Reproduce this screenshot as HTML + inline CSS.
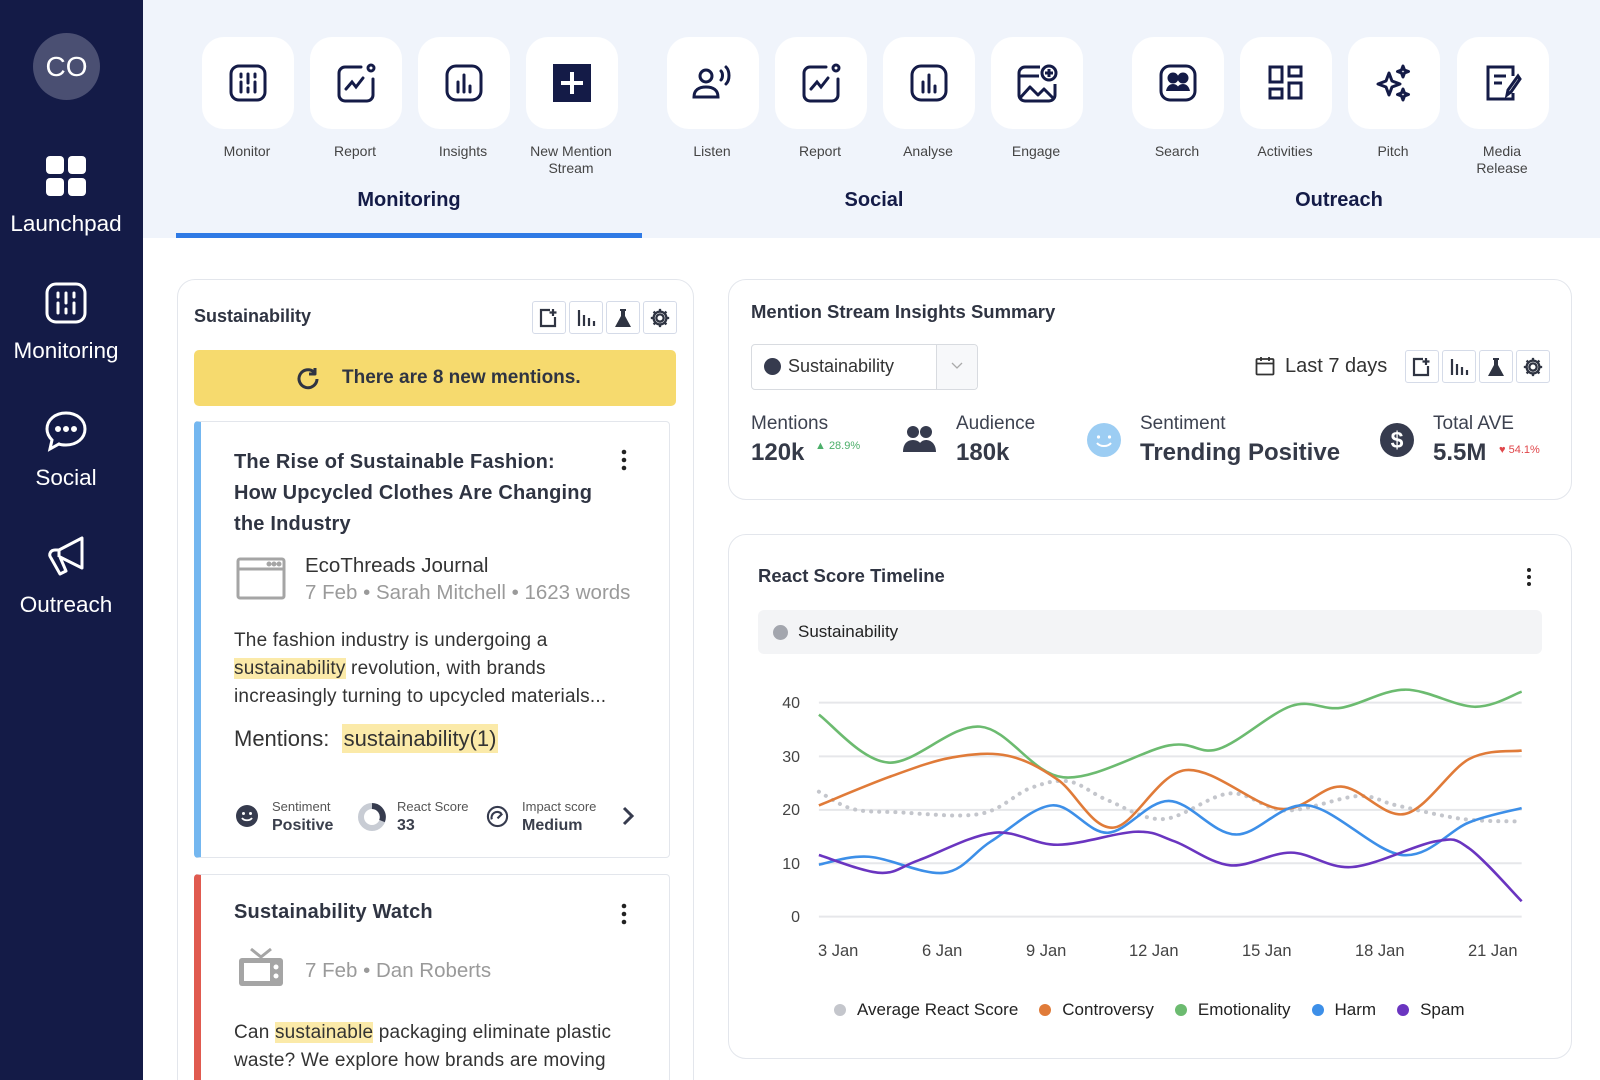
<!DOCTYPE html>
<html style="width:1600px;height:1080px;overflow:hidden"><head><meta charset="utf-8">
<style>
*{box-sizing:border-box;margin:0;padding:0}
body{width:1600px;height:1080px;overflow:hidden;background:#fff;font-family:"Liberation Sans",sans-serif;position:relative;color:#2b3040}
.abs{position:absolute}
#side{left:0;top:0;width:143px;height:1080px;background:#141b47}
.nav{position:absolute;left:0;width:132px;text-align:center;color:#fff;font-size:22.5px}
#top{left:143px;top:0;width:1457px;height:238px;background:#f0f4fb}
.tile{position:absolute;top:37px;width:92px;height:92px;background:#fff;border-radius:22px;display:flex;align-items:center;justify-content:center}
.tl{position:absolute;top:143px;width:120px;text-align:center;font-size:14px;color:#444;line-height:17px}
.grp{position:absolute;top:189px;font-size:20px;font-weight:bold;color:#141b47;transform:translateX(-50%)}
.card{position:absolute;background:#fff;border:1.5px solid #e3e6ec;border-radius:18px}
.ib{position:absolute;width:34px;height:33px;border:1.5px solid #d5dbe8;border-radius:3px;display:flex;align-items:center;justify-content:center;background:#fff}
.hl{background:#fbeaa9}
.sm{font-size:13px;color:#555}
.bv{font-size:16px;font-weight:bold;color:#3a3f4c}
.lab{font-size:19px;color:#3d4250}
.val{font-size:24px;font-weight:bold;color:#353a48}
.snip{font-size:19px;line-height:28px;color:#333;letter-spacing:0.2px}
</style></head><body>
<div id="side" class="abs">
  <div class="abs" style="left:33px;top:33px;width:67px;height:67px;border-radius:50%;background:#4a4f72;color:#fff;font-size:28px;display:flex;align-items:center;justify-content:center">CO</div>
  <svg class="abs" style="left:46px;top:156px" width="40" height="40" viewBox="0 0 40 40"><rect x="0" y="0" width="18" height="18" rx="4" fill="#fff"/><rect x="22" y="0" width="18" height="18" rx="4" fill="#fff"/><rect x="0" y="22" width="18" height="18" rx="4" fill="#fff"/><rect x="22" y="22" width="18" height="18" rx="4" fill="#fff"/></svg>
  <div class="nav" style="top:211px">Launchpad</div>
  <svg class="abs" style="left:45px;top:282px" width="42" height="42" viewBox="0 0 42 42" fill="none" stroke="#fff" stroke-width="3" stroke-linecap="round"><rect x="2" y="2" width="38" height="38" rx="9"/><path d="M13 11v4M13 21v10M21 11v10M21 27v4M29 11v4M29 21v10"/></svg>
  <div class="nav" style="top:338px">Monitoring</div>
  <svg class="abs" style="left:44px;top:410px" width="44" height="42" viewBox="0 0 44 42" fill="none" stroke="#fff" stroke-width="3"><path d="M22 3C11 3 3 10 3 19c0 5 2 8 5 11l-2 9 9-5c2 1 5 1 7 1 11 0 19-7 19-16S33 3 22 3z"/><circle cx="14" cy="19" r="1.5" fill="#fff"/><circle cx="22" cy="19" r="1.5" fill="#fff"/><circle cx="30" cy="19" r="1.5" fill="#fff"/></svg>
  <div class="nav" style="top:465px">Social</div>
  <svg class="abs" style="left:46px;top:535px" width="40" height="44" viewBox="0 0 40 44" fill="none" stroke="#fff" stroke-width="3" stroke-linejoin="round"><path d="M36 3v30L14 22l6 14-6 3-9-16c-3-4 0-8 4-8h4L36 3z"/><path d="M13 15v7"/></svg>
  <div class="nav" style="top:592px">Outreach</div>
</div>

<div id="top" class="abs"></div>
<div class="tile" style="left:202px"><svg width="40" height="40" viewBox="0 0 40 40" fill="none" stroke="#141b47" stroke-width="3" stroke-linecap="round"><rect x="3" y="3" width="34" height="34" rx="8"/><path d="M13 11v3M13 19v10M20 11v9M20 25v4M27 11v3M27 19v10"/></svg></div>
<div class="tile" style="left:310px"><svg width="42" height="42" viewBox="0 0 42 42" fill="none" stroke="#141b47" stroke-width="3" stroke-linecap="round"><path d="M26 5H10a6 6 0 0 0-6 6v22a6 6 0 0 0 6 6h22a6 6 0 0 0 6-6V17"/><circle cx="36" cy="6" r="3"/><path d="M11 27l6-7 4 5 7-9"/></svg></div>
<div class="tile" style="left:418px"><svg width="40" height="40" viewBox="0 0 40 40" fill="none" stroke="#141b47" stroke-width="3" stroke-linecap="round"><rect x="3" y="3" width="34" height="34" rx="9"/><path d="M14 19v10M20 12v17M26 23v6"/></svg></div>
<div class="tile" style="left:526px"><svg width="38" height="38" viewBox="0 0 38 38"><rect width="38" height="38" fill="#141b47"/><path d="M19 8v22M8 19h22" stroke="#fff" stroke-width="4"/></svg></div>
<div class="tile" style="left:667px"><svg width="44" height="40" viewBox="0 0 44 40" fill="none" stroke="#141b47" stroke-width="3" stroke-linecap="round"><circle cx="15" cy="13" r="6"/><path d="M3 34c0-7 5-10 12-10s12 3 12 10z"/><path d="M30 8c2 2 2 7 0 9M35 4c4 4 4 13 0 17"/></svg></div>
<div class="tile" style="left:775px"><svg width="42" height="42" viewBox="0 0 42 42" fill="none" stroke="#141b47" stroke-width="3" stroke-linecap="round"><path d="M26 5H10a6 6 0 0 0-6 6v22a6 6 0 0 0 6 6h22a6 6 0 0 0 6-6V17"/><circle cx="36" cy="6" r="3"/><path d="M11 27l6-7 4 5 7-9"/></svg></div>
<div class="tile" style="left:883px"><svg width="40" height="40" viewBox="0 0 40 40" fill="none" stroke="#141b47" stroke-width="3" stroke-linecap="round"><rect x="3" y="3" width="34" height="34" rx="9"/><path d="M14 19v10M20 12v17M26 23v6"/></svg></div>
<div class="tile" style="left:991px"><svg width="42" height="42" viewBox="0 0 42 42" fill="none" stroke="#141b47" stroke-width="3" stroke-linejoin="round"><path d="M24 5H9a6 6 0 0 0-6 6v22a6 6 0 0 0 6 6h24a6 6 0 0 0 6-6V22"/><path d="M3 14h20"/><circle cx="33" cy="11" r="7"/><path d="M33 7v8M29 11h8"/><path d="M4 36l10-11 8 8 6-6 10 10"/></svg></div>
<div class="tile" style="left:1132px"><svg width="40" height="40" viewBox="0 0 40 40" fill="none" stroke="#141b47" stroke-width="3"><rect x="3" y="3" width="34" height="34" rx="9"/><circle cx="15" cy="15" r="4" fill="#141b47"/><circle cx="25" cy="15" r="4" fill="#141b47"/><path d="M8 28c1-5 4-7 7-7s6 2 7 7zM18 28c1-5 4-7 7-7s6 2 7 7z" fill="#141b47" stroke="none"/></svg></div>
<div class="tile" style="left:1240px"><svg width="36" height="36" viewBox="0 0 36 36" fill="none" stroke="#141b47" stroke-width="3"><rect x="2" y="2" width="12" height="15"/><rect x="21" y="2" width="12" height="9"/><rect x="2" y="24" width="12" height="9"/><rect x="21" y="18" width="12" height="15"/></svg></div>
<div class="tile" style="left:1348px"><svg width="40" height="40" viewBox="0 0 40 40" fill="none" stroke="#141b47" stroke-width="3" stroke-linejoin="round"><path d="M15 10l3 8 8 3-8 3-3 8-3-8-8-3 8-3z"/><path d="M29 3l1.5 4 4 1.5-4 1.5L29 14l-1.5-4-4-1.5 4-1.5z"/><path d="M29 26l1.5 4 4 1.5-4 1.5L29 37l-1.5-4-4-1.5 4-1.5z"/></svg></div>
<div class="tile" style="left:1457px"><svg width="38" height="38" viewBox="0 0 38 38" fill="none" stroke="#141b47" stroke-width="3"><path d="M29 12V3H4v32h25v-6"/><path d="M10 12h12M10 19h8"/><path d="M34 12L24 26l-1 5 4-3L36 15z"/></svg></div>
<div class="tl" style="left:187px">Monitor</div>
<div class="tl" style="left:295px">Report</div>
<div class="tl" style="left:403px">Insights</div>
<div class="tl" style="left:511px">New Mention<br>Stream</div>
<div class="tl" style="left:652px">Listen</div>
<div class="tl" style="left:760px">Report</div>
<div class="tl" style="left:868px">Analyse</div>
<div class="tl" style="left:976px">Engage</div>
<div class="tl" style="left:1117px">Search</div>
<div class="tl" style="left:1225px">Activities</div>
<div class="tl" style="left:1333px">Pitch</div>
<div class="tl" style="left:1442px">Media<br>Release</div>
<div class="grp" style="left:409px">Monitoring</div>
<div class="grp" style="left:874px">Social</div>
<div class="grp" style="left:1339px">Outreach</div>
<div class="abs" style="left:176px;top:233px;width:466px;height:5px;background:#2f7ae5"></div>

<div class="card" style="left:177px;top:279px;width:517px;height:840px"></div>
<div class="abs" style="left:194px;top:306px;font-size:18px;font-weight:bold;color:#2f3442">Sustainability</div>
<div class="ib" style="left:532px;top:301px"><svg width="20" height="20" viewBox="0 0 20 20" fill="none" stroke="#2f3442" stroke-width="2.2"><path d="M11 2H2v16h14V9"/><path d="M14 1v7M10.5 4.5h7"/></svg></div>
<div class="ib" style="left:569px;top:301px"><svg width="20" height="20" viewBox="0 0 20 20" stroke="#2f3442" stroke-width="2.2"><path d="M3 2v16M8 7v11M13 10v8M18 13v5"/></svg></div>
<div class="ib" style="left:606px;top:301px"><svg width="18" height="20" viewBox="0 0 18 20"><path d="M6 1h6v2h-1v5l6 11H1L7 8V3H6z" fill="#2f3442"/></svg></div>
<div class="ib" style="left:643px;top:301px"><svg width="22" height="22" viewBox="0 0 24 24" fill="none" stroke="#2f3442" stroke-width="2.5"><circle cx="12" cy="12" r="4"/><path d="M12 2v3M12 19v3M2 12h3M19 12h3M5 5l2 2M17 17l2 2M5 19l2-2M17 7l2-2"/><circle cx="12" cy="12" r="7"/></svg></div>
<div class="abs" style="left:194px;top:350px;width:482px;height:56px;background:#f6da6e;border-radius:5px"></div>
<svg class="abs" style="left:295px;top:366px" width="26" height="26" viewBox="0 0 26 26" fill="none" stroke="#2f3442" stroke-width="3"><path d="M22 13a9 9 0 1 1-3-7"/><path d="M20 2v6h-6" stroke-linejoin="round"/></svg>
<div class="abs" style="left:342px;top:367px;font-size:19px;font-weight:bold;color:#2f3442">There are 8 new mentions.</div>

<div class="abs" style="left:194px;top:421px;width:476px;height:437px;border:1.5px solid #e3e6ec;border-left:7px solid #74b7f0;border-radius:4px;background:#fff"></div>
<div class="abs" style="left:234px;top:447px;width:420px;white-space:nowrap;font-size:20px;font-weight:bold;line-height:31px;color:#2f3442;letter-spacing:0.2px">The Rise of Sustainable Fashion:<br>How Upcycled Clothes Are Changing<br>the Industry</div>
<svg class="abs" style="left:621px;top:449px" width="6" height="22"><circle cx="3" cy="3" r="2.3" fill="#222"/><circle cx="3" cy="11" r="2.3" fill="#222"/><circle cx="3" cy="19" r="2.3" fill="#222"/></svg>
<svg class="abs" style="left:236px;top:557px" width="50" height="43" viewBox="0 0 50 43" fill="none" stroke="#a5a5a5" stroke-width="3"><rect x="2" y="2" width="46" height="39" rx="2"/><path d="M2 12h46"/><circle cx="33" cy="7" r="1" fill="#a5a5a5"/><circle cx="38" cy="7" r="1" fill="#a5a5a5"/><circle cx="43" cy="7" r="1" fill="#a5a5a5"/></svg>
<div class="abs" style="left:305px;top:554px;font-size:20.5px;color:#333">EcoThreads Journal</div>
<div class="abs" style="left:305px;top:581px;font-size:20.5px;color:#9a9a9a">7 Feb • Sarah Mitchell • 1623 words</div>
<div class="abs snip" style="left:234px;top:627px;width:385px">The fashion industry is undergoing a <span class="hl">sustainability</span> revolution, with brands increasingly turning to upcycled materials...</div>
<div class="abs" style="left:234px;top:726px;font-size:22px;color:#333">Mentions:&nbsp; <span class="hl" style="padding:2px 2px">sustainability(1)</span></div>
<svg class="abs" style="left:236px;top:805px" width="22" height="22" viewBox="0 0 22 22"><circle cx="11" cy="11" r="11" fill="#363b4e"/><circle cx="7.5" cy="8.5" r="1.5" fill="#fff"/><circle cx="14.5" cy="8.5" r="1.5" fill="#fff"/><path d="M6 13c2 3 8 3 10 0" stroke="#fff" stroke-width="1.8" fill="none"/></svg>
<div class="abs sm" style="left:272px;top:799px">Sentiment</div>
<div class="abs bv" style="left:272px;top:817px">Positive</div>
<svg class="abs" style="left:358px;top:803px" width="28" height="28" viewBox="0 0 28 28" fill="none" stroke-width="6"><circle cx="14" cy="14" r="11" stroke="#c8ccd4"/><path d="M14 3a11 11 0 0 1 10 15" stroke="#363b4e"/></svg>
<div class="abs sm" style="left:397px;top:799px">React Score</div>
<div class="abs bv" style="left:397px;top:817px">33</div>
<svg class="abs" style="left:486px;top:805px" width="23" height="23" viewBox="0 0 24 24" fill="none" stroke="#363b4e" stroke-width="2.2"><circle cx="12" cy="12" r="10"/><path d="M6 15a6 6 0 0 1 10-6"/><path d="M12 14l5-5"/></svg>
<div class="abs sm" style="left:522px;top:799px">Impact score</div>
<div class="abs bv" style="left:522px;top:817px">Medium</div>
<svg class="abs" style="left:621px;top:806px" width="14" height="20" viewBox="0 0 14 20" fill="none" stroke="#363b4e" stroke-width="3"><path d="M3 2l8 8-8 8"/></svg>

<div class="abs" style="left:194px;top:874px;width:476px;height:260px;border:1.5px solid #e3e6ec;border-left:7px solid #e05a4f;border-radius:4px;background:#fff"></div>
<div class="abs" style="left:234px;top:901px;font-size:20px;font-weight:bold;color:#2f3442;letter-spacing:0.2px">Sustainability Watch</div>
<svg class="abs" style="left:621px;top:903px" width="6" height="22"><circle cx="3" cy="3" r="2.3" fill="#222"/><circle cx="3" cy="11" r="2.3" fill="#222"/><circle cx="3" cy="19" r="2.3" fill="#222"/></svg>
<svg class="abs" style="left:238px;top:947px" width="46" height="40" viewBox="0 0 46 40"><path d="M13 2l10 8 10-8" stroke="#a5a5a5" stroke-width="3" fill="none"/><rect x="1" y="11" width="44" height="28" rx="3" fill="#a5a5a5"/><rect x="6" y="16" width="26" height="18" fill="#fff"/><circle cx="38" cy="20" r="2.5" fill="#fff"/><circle cx="38" cy="29" r="2.5" fill="#fff"/></svg>
<div class="abs" style="left:305px;top:959px;font-size:20.5px;color:#9a9a9a">7 Feb • Dan Roberts</div>
<div class="abs snip" style="left:234px;top:1019px;width:400px">Can <span class="hl">sustainable</span> packaging eliminate plastic waste? We explore how brands are moving</div>

<div class="card" style="left:728px;top:279px;width:844px;height:221px"></div>
<div class="abs" style="left:751px;top:301px;font-size:18.5px;font-weight:bold;color:#2f3442">Mention Stream Insights Summary</div>
<div class="abs" style="left:751px;top:344px;width:227px;height:46px;border:1.5px solid #d8dbe0;border-radius:4px;background:#fff"></div>
<div class="abs" style="left:936px;top:345px;width:41px;height:44px;border-left:1.5px solid #d8dbe0;background:#f7f8fa;border-radius:0 4px 4px 0"></div>
<svg class="abs" style="left:951px;top:362px" width="12" height="8"><path d="M1 1l5 5 5-5" stroke="#aaa" fill="none" stroke-width="1.3"/></svg>
<div class="abs" style="left:764px;top:358px;width:17px;height:17px;border-radius:50%;background:#363b4e"></div>
<div class="abs" style="left:788px;top:356px;font-size:18px;color:#333">Sustainability</div>
<svg class="abs" style="left:1255px;top:356px" width="20" height="20" viewBox="0 0 20 20" fill="none" stroke="#333" stroke-width="1.8"><rect x="1.5" y="3" width="17" height="15.5" rx="1"/><path d="M1.5 7.5h17M6 1v4M14 1v4"/></svg>
<div class="abs" style="left:1285px;top:355px;font-size:20px;color:#333">Last 7 days</div>
<div class="ib" style="left:1405px;top:350px"><svg width="20" height="20" viewBox="0 0 20 20" fill="none" stroke="#2f3442" stroke-width="2.2"><path d="M11 2H2v16h14V9"/><path d="M14 1v7M10.5 4.5h7"/></svg></div>
<div class="ib" style="left:1442px;top:350px"><svg width="20" height="20" viewBox="0 0 20 20" stroke="#2f3442" stroke-width="2.2"><path d="M3 2v16M8 7v11M13 10v8M18 13v5"/></svg></div>
<div class="ib" style="left:1479px;top:350px"><svg width="18" height="20" viewBox="0 0 18 20"><path d="M6 1h6v2h-1v5l6 11H1L7 8V3H6z" fill="#2f3442"/></svg></div>
<div class="ib" style="left:1516px;top:350px"><svg width="22" height="22" viewBox="0 0 24 24" fill="none" stroke="#2f3442" stroke-width="2.5"><circle cx="12" cy="12" r="4"/><path d="M12 2v3M12 19v3M2 12h3M19 12h3M5 5l2 2M17 17l2 2M5 19l2-2M17 7l2-2"/><circle cx="12" cy="12" r="7"/></svg></div>
<div class="abs lab" style="left:751px;top:413px">Mentions</div>
<div class="abs val" style="left:751px;top:439px">120k</div>
<div class="abs" style="left:815px;top:440px;font-size:11px;color:#4caf6a">▲ 28.9%</div>
<svg class="abs" style="left:903px;top:425px" width="34" height="28" viewBox="0 0 34 28" fill="#363b4e"><circle cx="10" cy="7" r="6"/><circle cx="23" cy="7" r="6"/><path d="M0 27c0-8 4-12 10-12s10 4 10 12zM14 27c1-8 4-12 9-12s10 4 10 12z"/></svg>
<div class="abs lab" style="left:956px;top:413px">Audience</div>
<div class="abs val" style="left:956px;top:439px">180k</div>
<svg class="abs" style="left:1086px;top:422px" width="36" height="36" viewBox="0 0 36 36"><circle cx="18" cy="18" r="17" fill="#9ccdf3"/><circle cx="12.5" cy="15" r="1.6" fill="#fff"/><circle cx="23.5" cy="15" r="1.6" fill="#fff"/><path d="M11 21c3 4 11 4 14 0" stroke="#fff" stroke-width="2" fill="none"/></svg>
<div class="abs lab" style="left:1140px;top:413px">Sentiment</div>
<div class="abs val" style="left:1140px;top:439px">Trending Positive</div>
<svg class="abs" style="left:1379px;top:422px" width="36" height="36" viewBox="0 0 36 36"><circle cx="18" cy="18" r="17" fill="#363b4e"/><text x="18" y="26" text-anchor="middle" font-family="Liberation Sans" font-weight="bold" font-size="23" fill="#fff">$</text></svg>
<div class="abs lab" style="left:1433px;top:413px">Total AVE</div>
<div class="abs val" style="left:1433px;top:439px">5.5M</div>
<div class="abs" style="left:1499px;top:444px;font-size:11px;color:#e0464a">♥ 54.1%</div>

<div class="card" style="left:728px;top:534px;width:844px;height:525px"></div>
<div class="abs" style="left:758px;top:565px;font-size:18.5px;font-weight:bold;color:#2f3442">React Score Timeline</div>
<svg class="abs" style="left:1526px;top:567px" width="6" height="20"><circle cx="3" cy="3" r="2" fill="#222"/><circle cx="3" cy="10" r="2" fill="#222"/><circle cx="3" cy="17" r="2" fill="#222"/></svg>
<div class="abs" style="left:758px;top:610px;width:784px;height:44px;background:#f3f4f6;border-radius:6px"></div>
<div class="abs" style="left:773px;top:625px;width:15px;height:15px;border-radius:50%;background:#a3a6ae"></div>
<div class="abs" style="left:798px;top:622px;font-size:17px;color:#222">Sustainability</div>
<div class="abs" style="left:770px;top:694px;width:30px;text-align:right;font-size:16px;color:#444;line-height:20px">40</div>
<div class="abs" style="left:770px;top:748px;width:30px;text-align:right;font-size:16px;color:#444;line-height:20px">30</div>
<div class="abs" style="left:770px;top:801px;width:30px;text-align:right;font-size:16px;color:#444;line-height:20px">20</div>
<div class="abs" style="left:770px;top:855px;width:30px;text-align:right;font-size:16px;color:#444;line-height:20px">10</div>
<div class="abs" style="left:770px;top:908px;width:30px;text-align:right;font-size:16px;color:#444;line-height:20px">0</div>
<svg class="abs" id="ch" style="left:730px;top:540px" width="870" height="540" viewBox="0 0 1566 1577" preserveAspectRatio="none"></svg>
<div class="abs" style="left:818px;top:942px;font-size:16.5px;color:#444">3 Jan</div>
<div class="abs" style="left:922px;top:942px;font-size:16.5px;color:#444">6 Jan</div>
<div class="abs" style="left:1026px;top:942px;font-size:16.5px;color:#444">9 Jan</div>
<div class="abs" style="left:1129px;top:942px;font-size:16.5px;color:#444">12 Jan</div>
<div class="abs" style="left:1242px;top:942px;font-size:16.5px;color:#444">15 Jan</div>
<div class="abs" style="left:1355px;top:942px;font-size:16.5px;color:#444">18 Jan</div>
<div class="abs" style="left:1468px;top:942px;font-size:16.5px;color:#444">21 Jan</div>
<div class="abs" style="left:834px;top:1000px;font-size:17px;color:#222;display:flex;align-items:center;white-space:nowrap">
<span style="width:12px;height:12px;border-radius:50%;background:#c4c6cc;margin-right:11px"></span>Average React Score
<span style="width:12px;height:12px;border-radius:50%;background:#e07b39;margin:0 11px 0 21px"></span>Controversy
<span style="width:12px;height:12px;border-radius:50%;background:#6cbb70;margin:0 11px 0 21px"></span>Emotionality
<span style="width:12px;height:12px;border-radius:50%;background:#3d8fe8;margin:0 11px 0 21px"></span>Harm
<span style="width:12px;height:12px;border-radius:50%;background:#6a35c0;margin:0 11px 0 21px"></span>Spam
</div>
<script>
(function(){
var s=document.getElementById('ch'),h='';
[475,632,788,944,1100].forEach(function(y){h+='<line x1="160" x2="1425" y1="'+y+'" y2="'+y+'" stroke="#e6e7ea" stroke-width="2" vector-effect="non-scaling-stroke"/>';});
function p(a){var d='M'+a[0][0]+' '+a[0][1];for(var i=0;i<a.length-1;i++){var p0=a[i-1]||a[i],p1=a[i],p2=a[i+1],p3=a[i+2]||p2;d+=' C'+(p1[0]+(p2[0]-p0[0])/6)+' '+(p1[1]+(p2[1]-p0[1])/6)+' '+(p2[0]-(p3[0]-p1[0])/6)+' '+(p2[1]-(p3[1]-p1[1])/6)+' '+p2[0]+' '+p2[1];}return d;}
var L=[
['#c4c6cc',[[160,735],[220,785],[300,795],[450,800],[540,725],[610,705],[680,760],[780,815],[900,740],[1000,790],[1130,748],[1200,775],[1320,815],[1425,822]],1],
['#6cbb70',[[160,510],[285,650],[450,545],[600,693],[790,600],[880,610],[1010,485],[1100,490],[1215,437],[1340,487],[1425,443]]],
['#e07b39',[[160,775],[290,690],[400,635],[500,630],[590,700],[690,840],[820,672],[990,785],[1100,720],[1215,800],[1330,640],[1425,615]]],
['#3d8fe8',[[160,948],[250,925],[385,972],[470,880],[580,775],[680,855],[790,762],[910,860],[1040,775],[1210,920],[1330,825],[1425,783]]],
['#6a35c0',[[160,920],[270,972],[340,935],[475,855],[590,890],[730,852],[800,880],[900,950],[1010,913],[1120,955],[1270,880],[1330,900],[1425,1055]]]];
L.forEach(function(l){h+='<path d="'+p(l[1])+'" fill="none" stroke="'+l[0]+'" stroke-width="'+(l[2]?4:2.6)+'" '+(l[2]?'stroke-dasharray="0.1 8" stroke-linecap="round"':'')+' vector-effect="non-scaling-stroke"/>';});
s.innerHTML=h;
})();
</script>
</body></html>
